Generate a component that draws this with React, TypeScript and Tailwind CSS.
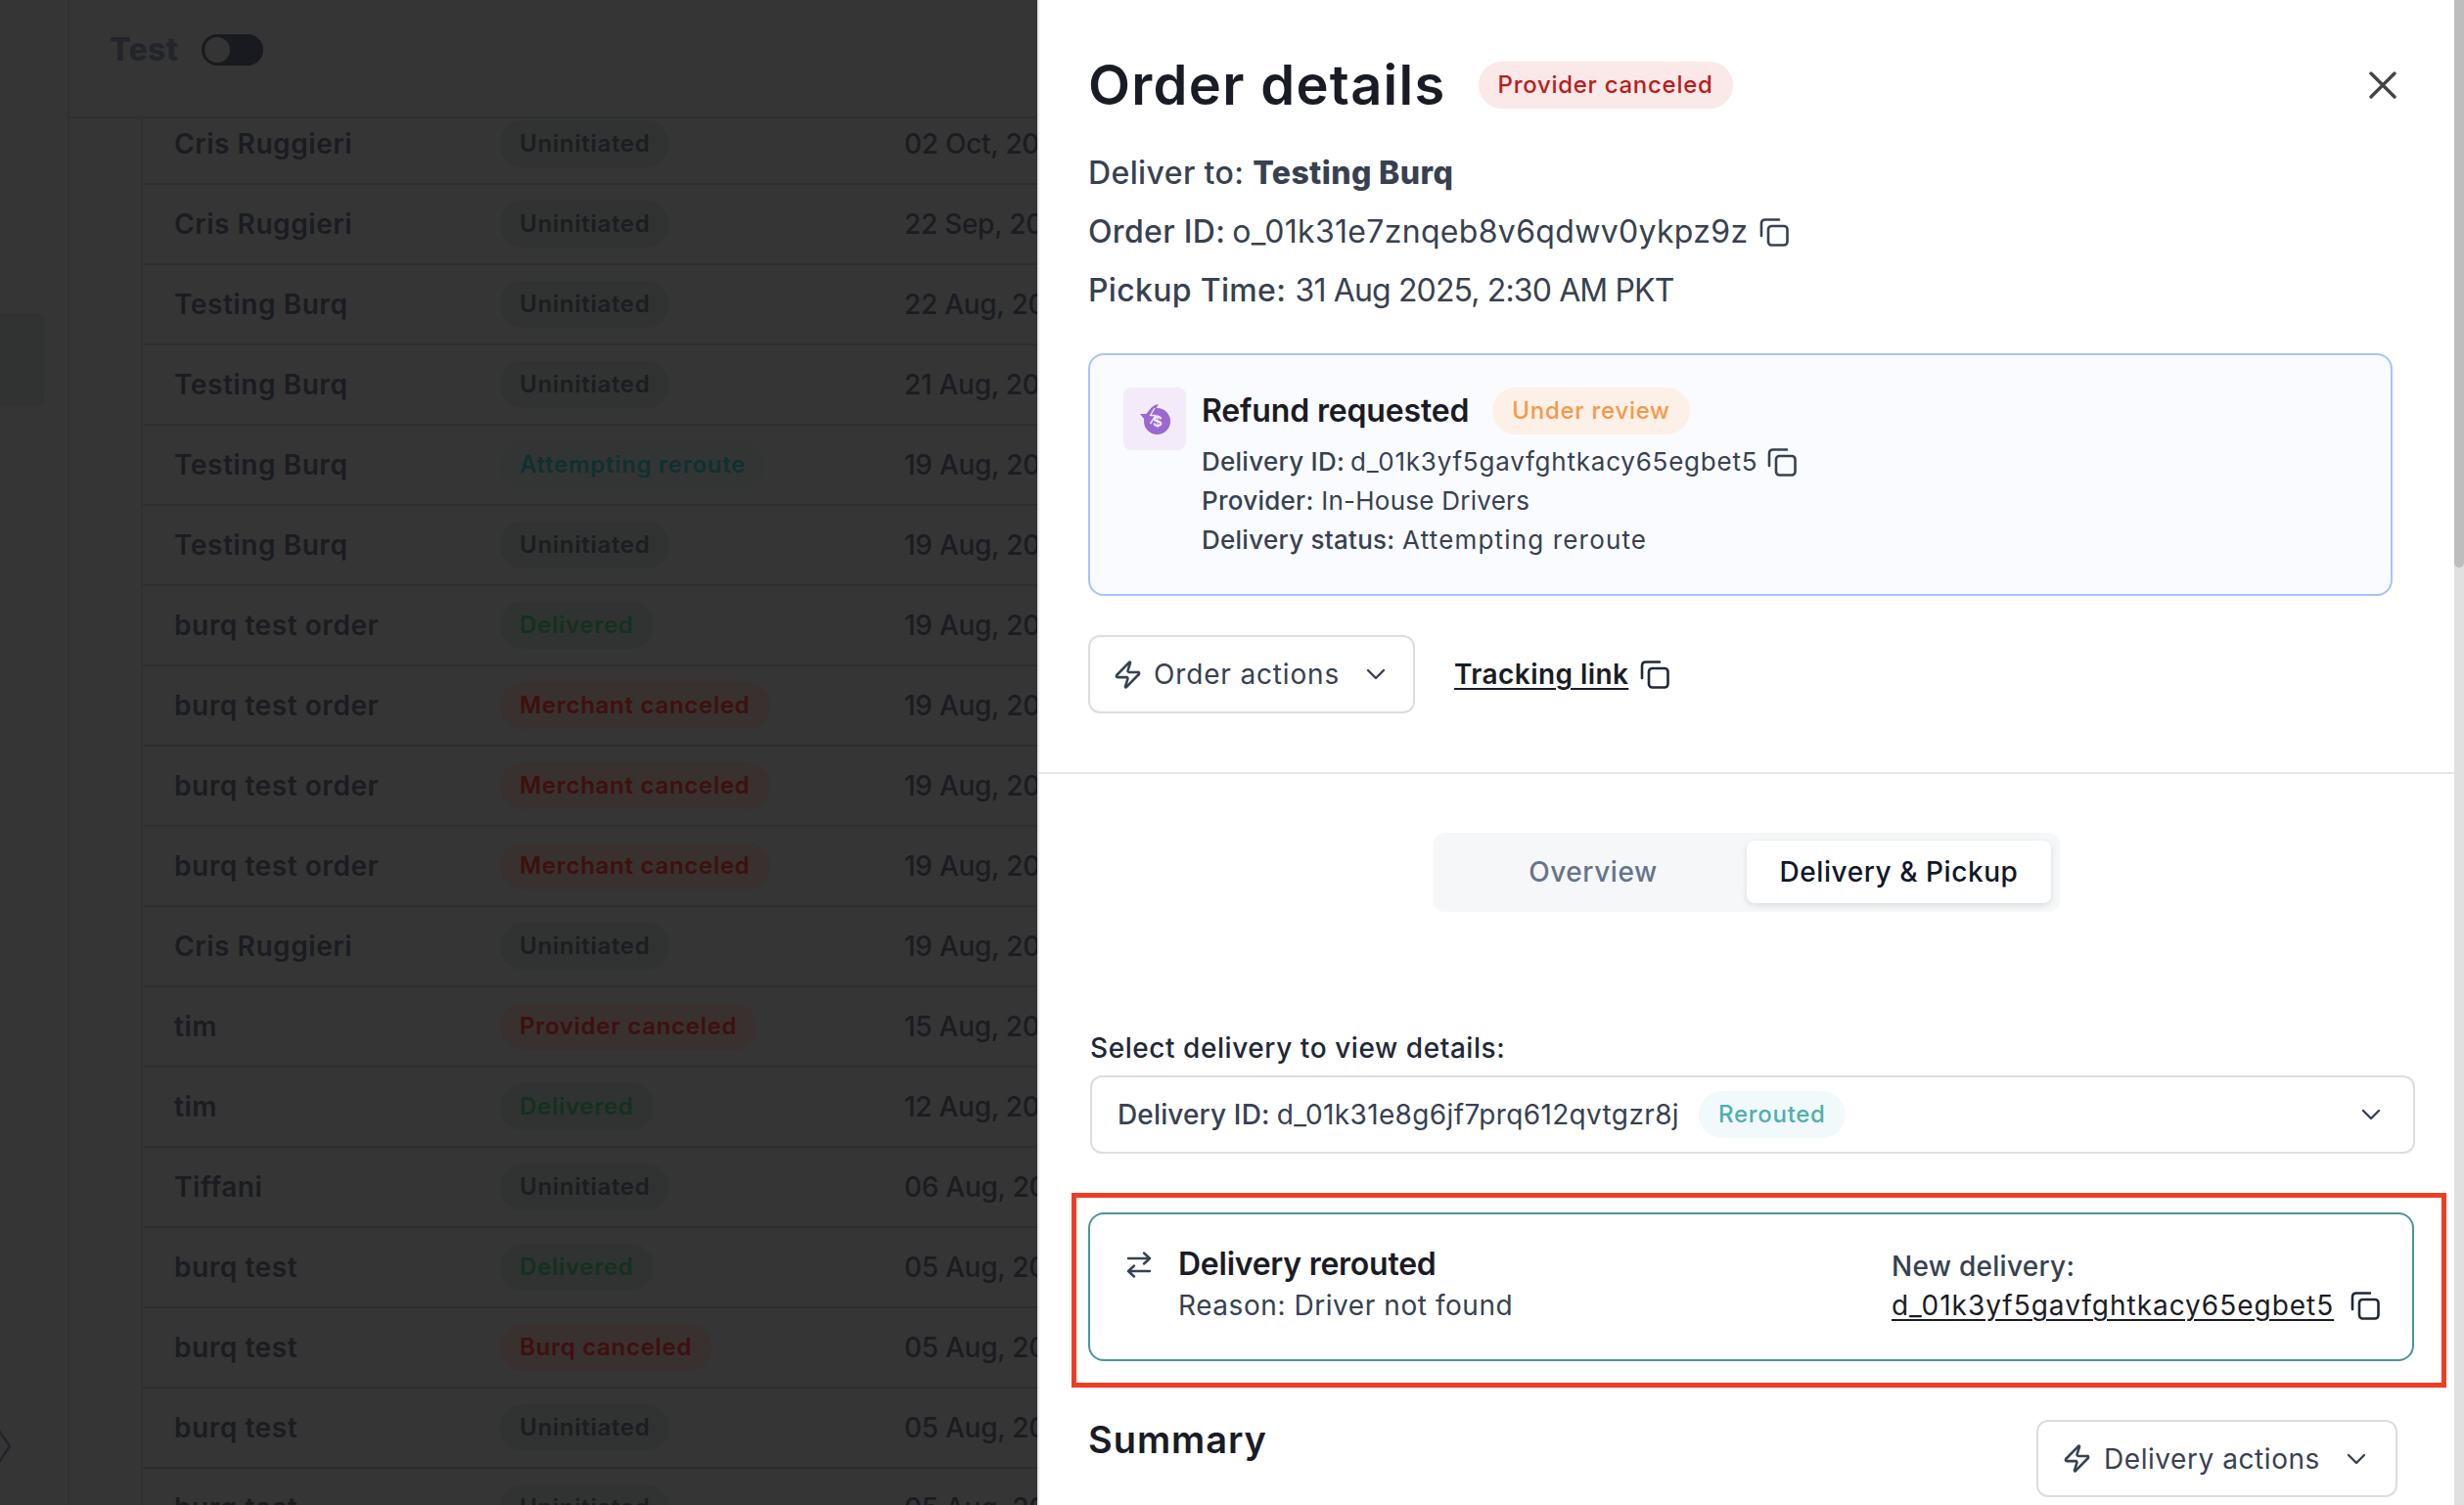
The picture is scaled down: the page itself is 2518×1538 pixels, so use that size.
import React from "react";

const F = "font-['Inter','Liberation_Sans',sans-serif]";

type Tone = "gray" | "green" | "red" | "teal";
const tones: Record<Tone, string> = {
  gray: "bg-[#303331] text-[#1b1d22] font-semibold",
  green: "bg-[#303332] text-[#14301f] font-semibold",
  red: "bg-[#383130] text-[#3f0f0f] font-semibold",
  teal: "bg-[#333535] text-[#10302f] font-semibold",
};

const rows: [string, string, Tone, string][] = [
  ["Cris Ruggieri", "Uninitiated", "gray", "02 Oct, 2025"],
  ["Cris Ruggieri", "Uninitiated", "gray", "22 Sep, 2025"],
  ["Testing Burq", "Uninitiated", "gray", "22 Aug, 2025"],
  ["Testing Burq", "Uninitiated", "gray", "21 Aug, 2025"],
  ["Testing Burq", "Attempting reroute", "teal", "19 Aug, 2025"],
  ["Testing Burq", "Uninitiated", "gray", "19 Aug, 2025"],
  ["burq test order", "Delivered", "green", "19 Aug, 2025"],
  ["burq test order", "Merchant canceled", "red", "19 Aug, 2025"],
  ["burq test order", "Merchant canceled", "red", "19 Aug, 2025"],
  ["burq test order", "Merchant canceled", "red", "19 Aug, 2025"],
  ["Cris Ruggieri", "Uninitiated", "gray", "19 Aug, 2025"],
  ["tim", "Provider canceled", "red", "15 Aug, 2025"],
  ["tim", "Delivered", "green", "12 Aug, 2025"],
  ["Tiffani", "Uninitiated", "gray", "06 Aug, 2025"],
  ["burq test", "Delivered", "green", "05 Aug, 2025"],
  ["burq test", "Burq canceled", "red", "05 Aug, 2025"],
  ["burq test", "Uninitiated", "gray", "05 Aug, 2025"],
  ["burq test", "Uninitiated", "gray", "05 Aug, 2025"],
];

function Copy({ className = "" }: { className?: string }) {
  return (
    <svg viewBox="0 0 30 30" fill="none" stroke="currentColor" strokeWidth="2.6" strokeLinecap="round" strokeLinejoin="round" className={`h-[30px] w-[30px] shrink-0 ${className}`}>
      <rect x="9" y="9" width="19.5" height="19.5" rx="3.5" />
      <path d="M20 2.5 H6 Q2 2.5 2 6.5 V19" />
    </svg>
  );
}

function Bolt() {
  return (
    <svg viewBox="0 0 24 24" fill="none" stroke="currentColor" strokeWidth="2" strokeLinecap="round" strokeLinejoin="round" className="-ml-[1px] h-[31px] w-[31px] shrink-0 text-[#374151]">
      <path d="M4 14a1 1 0 0 1-.78-1.63l9.9-10.2a.5.5 0 0 1 .86.46l-1.92 6.02A1 1 0 0 0 13 10h7a1 1 0 0 1 .78 1.63l-9.9 10.2a.5.5 0 0 1-.86-.46l1.92-6.02A1 1 0 0 0 11 14z" />
    </svg>
  );
}

function Chevron({ className = "" }: { className?: string }) {
  return (
    <svg viewBox="0 0 20 12" fill="none" stroke="currentColor" strokeWidth="2.4" strokeLinecap="round" strokeLinejoin="round" className={`h-[12px] w-[20px] shrink-0 text-[#374151] ${className}`}>
      <path d="M2 2 L10 10 L18 2" />
    </svg>
  );
}

function Badge({ text, className }: { text: string; className: string }) {
  return (
    <span className={`inline-flex h-[48px] items-center rounded-full px-[20px] text-[24px] font-medium tracking-[0.03em] whitespace-nowrap ${className}`}>
      {text}
    </span>
  );
}

export default function App() {
  return (
    <div className={`flex h-[1538px] w-[2518px] overflow-hidden bg-white ${F}`}>
      {/* dimmed page */}
      <div className="flex h-full w-[1060px] shrink-0 overflow-hidden bg-[#353535] text-[#1b1c21]">
        <div className="flex w-[71px] shrink-0 flex-col border-r-2 border-[#303030]">
          <div className="mt-[320px] h-[95px] w-[45px] rounded-r-lg bg-[#303331]" />
          <svg viewBox="0 0 14 34" fill="none" stroke="#22242b" strokeWidth="2.4" strokeLinecap="round" strokeLinejoin="round" className="mt-[1046px] -ml-[2px] h-[34px] w-[14px]">
            <path d="M1 1 L12 17 L1 33" />
          </svg>
        </div>
        <div className="flex min-w-0 flex-1 flex-col">
          <div className="flex h-[121px] shrink-0 items-start border-b-2 border-[#303030] pt-[35px] pl-[41px]">
            <span className="h-[32px] text-[32px] leading-[32px] font-extrabold tracking-[0.01em] text-[#23252b]">Test</span>
            <span className="ml-[24px] flex h-[32px] w-[63px] items-center rounded-full bg-[#191a1f] pl-[3px]">
              <span className="h-[26px] w-[26px] rounded-full bg-[#343434]" />
            </span>
          </div>
          <div className="ml-[73px] min-h-0 flex-1 overflow-hidden border-l-2 border-[#303030]">
            <div className="-mt-[14px]">
              {rows.map((r, i) => (
                <div key={i} className="flex h-[82px] items-center border-b-2 border-[#2e2e2e] pl-[32px] text-[28px] whitespace-nowrap">
                  <span className="w-[333px] shrink-0 font-semibold tracking-[0.02em]">{r[0]}</span>
                  <span className="w-[413px] shrink-0">
                    <Badge text={r[1]} className={tones[r[2]]} />
                  </span>
                  <span className="font-medium tracking-[-0.01em]">{r[3]}</span>
                </div>
              ))}
            </div>
          </div>
        </div>
      </div>

      {/* drawer */}
      <div className="flex h-full min-w-0 flex-1 border-l-2 border-[#e3e4ea]">
        <div className="relative min-w-0 flex-1 overflow-hidden">
          <div className="px-[50px]">
            <div className="flex items-center pt-[50px]">
              <h1 className="text-[56px] leading-[74px] font-semibold tracking-[0.023em] text-[#1a1c25]">Order details</h1>
              <Badge text="Provider canceled" className="ml-[33px] bg-[#fbe8e8] text-[#b91c1c]" />
              <svg viewBox="0 0 28 28" fill="none" stroke="#444444" strokeWidth="3.4" strokeLinecap="round" className="mr-[9px] ml-auto h-[28px] w-[28px]">
                <path d="M2 2 L26 26 M26 2 L2 26" />
              </svg>
            </div>
            <div className="mt-[29px] flex flex-col gap-[12px] text-[32px] leading-[48px] text-[#374151]">
              <div className="font-medium tracking-[0.012em]">Deliver to: <b className="font-extrabold tracking-[0.012em]">Testing Burq</b></div>
              <div className="flex items-center tracking-[0.01em]"><span className="font-medium">Order ID:</span><span className="ml-[7px]">o_01k31e7znqeb8v6qdwv0ykpz9z</span><Copy className="ml-[12px]" /></div>
              <div className="tracking-[0.01em]"><span className="font-medium">Pickup Time:</span> <span className="tracking-[-0.027em]">31 Aug 2025, 2:30 AM PKT</span></div>
            </div>

            <div className="mt-[40px] flex h-[248px] w-[1333px] items-start rounded-2xl border-2 border-[#a3c4fb] bg-[#fafbff] pt-[33px] pl-[34px]">
              <div className="flex h-[64px] w-[64px] shrink-0 items-center justify-center rounded-lg bg-[#f3ebfa]">
                <svg viewBox="0 0 31 31" className="h-[31px] w-[31px]">
                  <circle cx="17.5" cy="17.5" r="13.5" fill="#9a67d3" />
                  <path d="M0 10 H8 A13 13 0 0 1 19 0 L13 10 H16 L9 21 Z" fill="#9a67d3" />
                  <path d="M15 4 L10.5 11.5 H16 L10.5 20" fill="none" stroke="#f3ebfa" strokeWidth="1.4" strokeLinejoin="round" />
                  <text x="18" y="23" textAnchor="middle" fontSize="15" fontWeight="700" fill="#f3ebfa">$</text>
                </svg>
              </div>
              <div className="ml-[16px] min-w-0">
                <div className="flex h-[48px] items-center">
                  <span className="text-[32px] font-semibold tracking-[-0.005em] text-[#1a1c25]">Refund requested</span>
                  <Badge text="Under review" className="ml-[24px] bg-[#fdf0e7] text-[#f5994e]" />
                </div>
                <div className="mt-[8px] flex flex-col text-[26px] leading-[40px] tracking-[0.01em] text-[#374151]">
                  <div className="flex items-center"><span className="font-medium">Delivery ID:</span><span className="ml-[6px] tracking-[0.03em]">d_01k3yf5gavfghtkacy65egbet5</span><Copy className="ml-[10px]" /></div>
                  <div><span className="font-medium">Provider:</span> In-House Drivers</div>
                  <div><span className="font-medium">Delivery status:</span> <span className="tracking-[0.045em]">Attempting reroute</span></div>
                </div>
              </div>
            </div>

            <div className="mt-[40px] flex items-center">
              <button className="flex h-[80px] w-[334px] items-center rounded-xl border-2 border-[#dcdde3] pl-[24px] text-[28px] tracking-[0.03em] text-[#374151]">
                <Bolt />
                <span className="ml-[11px]">Order actions</span>
                <Chevron className="mr-[28px] ml-auto" />
              </button>
              <a className="ml-[40px] text-[28px] font-semibold tracking-[0.015em] text-[#1a1c25] underline decoration-2 underline-offset-4">Tracking link</a>
              <Copy className="ml-[12px] text-[#1f2937]" />
            </div>
          </div>

          <div className="mt-[60px] h-[2px] bg-[#e5e7eb]" />

          <div className="mt-[60px] flex justify-center">
            <div className="flex h-[80px] w-[640px] items-center rounded-xl bg-[#f6f7f9] py-[6px] pr-[9px] pl-[6px] shadow-[0_1px_2px_rgba(0,0,0,0.04)]">
              <span className="flex-1 text-center text-[28px] font-medium tracking-[0.02em] text-[#64748b]">Overview</span>
              <span className="flex h-[64px] w-[311px] items-center justify-center rounded-lg bg-white text-[28px] font-medium tracking-[0.02em] text-[#0f172a] shadow-[0_2px_6px_rgba(0,0,0,0.12)]">Delivery &amp; Pickup</span>
            </div>
          </div>

          <div className="pr-[40px] pl-[52px]">
            <div className="mt-[118px] text-[28px] leading-[44px] font-medium tracking-[0.02em] text-[#1f2937]">Select delivery to view details:</div>
            <div className="mt-[6px] flex h-[80px] items-center rounded-xl border-2 border-[#dcdde3] pr-[33px] pl-[26px] text-[28px] tracking-[0.01em] text-[#374151]">
              <span className="font-medium tracking-[0.005em]">Delivery ID:</span>
              <span className="ml-[7px] tracking-[0.013em]">d_01k31e8g6jf7prq612qvtgzr8j</span>
              <Badge text="Rerouted" className="ml-[20px] bg-[#f2f9fb] text-[#4fb0ac]" />
              <Chevron className="ml-auto" />
            </div>
          </div>

          <div className="mt-[60px] ml-[50px] flex h-[152px] w-[1355px] items-start rounded-2xl border-2 border-[#4a9596] bg-white pt-[30px]">
            <svg viewBox="0 0 26 27" fill="none" stroke="#374151" strokeWidth="2.4" strokeLinecap="round" strokeLinejoin="round" className="mt-[8px] ml-[37px] h-[27px] w-[26px] shrink-0">
              <path d="M2 7 H24 M18 1.5 L24 7 L18 12.5 M24 20 H2 M8 14.5 L2 20 L8 25.5" />
            </svg>
            <div className="ml-[27px] w-[729px] shrink-0">
              <div className="text-[32px] leading-[42px] font-semibold tracking-[-0.008em] text-[#1a1c25]">Delivery rerouted</div>
              <div className="mt-[1px] text-[28px] leading-[40px] tracking-[0.02em] text-[#374151]">Reason: Driver not found</div>
            </div>
            <div className="min-w-0 pt-[3px] text-[28px] leading-[40px] text-[#374151]">
              <div className="font-medium tracking-[0.01em]">New delivery:</div>
              <div className="flex items-center whitespace-nowrap">
                <a className="tracking-[0.035em] text-[#1a1c25] underline decoration-2 underline-offset-4">d_01k3yf5gavfghtkacy65egbet5</a>
                <Copy className="ml-[17px] text-[#1f2937]" />
              </div>
            </div>
          </div>

          <div className="mt-[60px] flex items-start pr-[58px] pl-[50px]">
            <span className="mt-[-2px] text-[38px] leading-[44px] font-semibold tracking-[0.025em] text-[#1a1c25]">Summary</span>
            <button className="ml-auto flex h-[79px] w-[369px] items-center rounded-xl border-2 border-[#dcdde3] pl-[25px] text-[28px] tracking-[0.02em] text-[#374151]">
              <Bolt />
              <span className="ml-[12px]">Delivery actions</span>
              <Chevron className="mr-[30px] ml-auto" />
            </button>
          </div>

          {/* annotation frame */}
          <div className="absolute top-[1219px] left-[33px] h-[199px] w-[1405px] border-[5px] border-[#ee3d23]" />
        </div>
        <div className="h-full w-[10px] shrink-0 bg-[#e0e0e0]">
          <div className="h-[580px] rounded-b-md bg-[#bdbdbd]" />
        </div>
      </div>
    </div>
  );
}
